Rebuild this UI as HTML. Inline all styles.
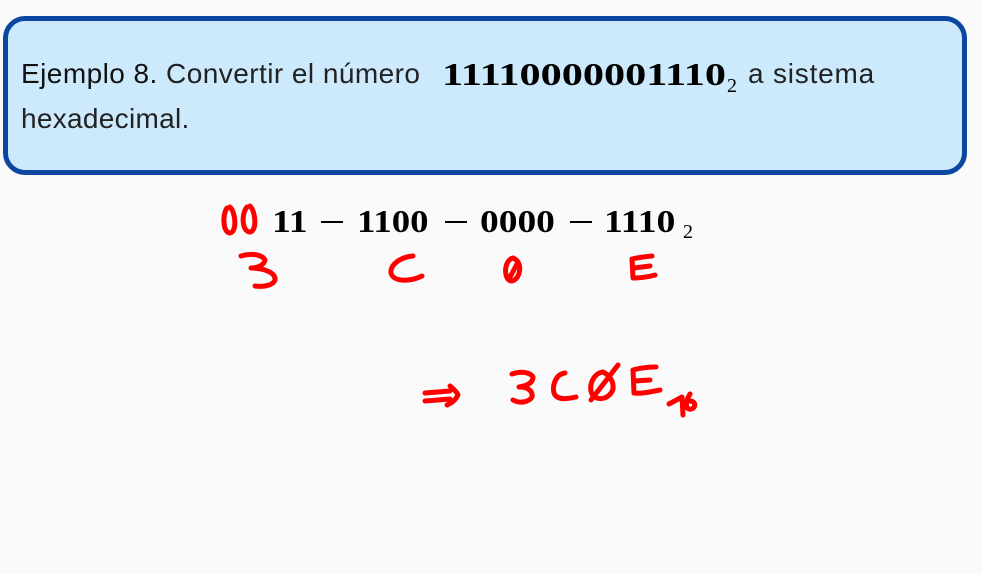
<!DOCTYPE html>
<html><head><meta charset="utf-8"><style>
body{margin:0;width:982px;height:574px;background:#fafafa;position:relative;overflow:hidden;font-family:"Liberation Sans",sans-serif}
.box{position:absolute;left:3px;top:16px;width:954px;height:149px;border:5px solid #0b47a1;border-radius:22px;background:#cdeafc}
.t{position:absolute;white-space:nowrap;color:#222;font-size:28px;line-height:1;font-weight:300}
.m{position:absolute;white-space:nowrap;font-family:"Liberation Serif",serif;font-weight:bold;color:#000;line-height:1;transform-origin:0 0}
.s{position:absolute;font-family:"Liberation Serif",serif;color:#000;line-height:1}
.mi{position:absolute;height:2px;background:#000;width:22px;top:221px}
</style></head><body>
<div class="box"></div>
<div class="t" style="left:21px;top:60px;letter-spacing:0.45px"><span style="font-weight:500;color:#111">Ejemplo 8.</span> Convertir el número</div>
<div class="m" style="left:442px;top:58px;font-size:32px;transform:scaleX(1.32)">11110000001110</div>
<div class="s" style="left:727px;top:76px;font-size:20px">2</div>
<div class="t" style="left:748px;top:60px;letter-spacing:0.8px">a sistema</div>
<div class="t" style="left:21px;top:105px;letter-spacing:0.3px">hexadecimal.</div>

<div class="m" style="left:272px;top:205px;font-size:32px;transform:scaleX(1.18)">11</div>
<div class="mi" style="left:321px"></div>
<div class="m" style="left:357px;top:205px;font-size:32px;transform:scaleX(1.15)">1100</div>
<div class="mi" style="left:445px"></div>
<div class="m" style="left:480px;top:205px;font-size:32px;transform:scaleX(1.17)">0000</div>
<div class="mi" style="left:570px"></div>
<div class="m" style="left:604px;top:205px;font-size:32px;transform:scaleX(1.18)">1110</div>
<div class="s" style="left:683px;top:222px;font-size:20px">2</div>

<svg width="982" height="574" style="position:absolute;left:0;top:0" fill="none" stroke="#f00" stroke-width="5" stroke-linecap="round" stroke-linejoin="round">
<path d="M227 208 C222 215,223 233,230 233 C237 232,236 213,230 207"/>
<path d="M247 207 C241 214,242 232,250 232 C257 231,256 212,250 206"/>
<path d="M241 256 C250 253,262 254,265 260 C264 266,256 268,251 268 C262 268,276 272,275 280 C273 286,262 287,255 286"/>
<path d="M413 256 C400 257,390 265,391 273 C393 282,410 282,422 276"/>
<path d="M513 258 C504 260,503 279,511 281 C520 281,524 262,513 258 M517 264 L509 279"/>
<path d="M652 256 C642 257,636 258,632 259 L633 278 C640 278,648 277,655 275 M634 268 L650 266"/>
<path d="M425 393 L450 391 M425 401 L450 399 M450 386 C455 390,458 394,458 395 C456 399,452 403,447 405"/>
<path d="M512 374 C521 371,530 372,533 377 C533 384,525 386,519 387 C528 387,533 391,532 397 C529 402,520 404,513 400"/>
<path d="M565 373 C556 374,552 385,554 393 C556 399,563 400,576 397"/>
<path d="M603 372 C594 373,588 385,592 394 C597 402,610 399,613 389 C614 379,607 374,603 372 M591 400 L618 365"/>
<path d="M633 370 C640 368,650 367,656 367 M633 370 L634 393 C640 394,650 392,660 390 M634 381 L650 380"/>
<path d="M669 404 L682 397 L683 415 M690 394 C686 400,685 408,689 409 C696 410,697 401,690 401"/>
</svg>
</body></html>
